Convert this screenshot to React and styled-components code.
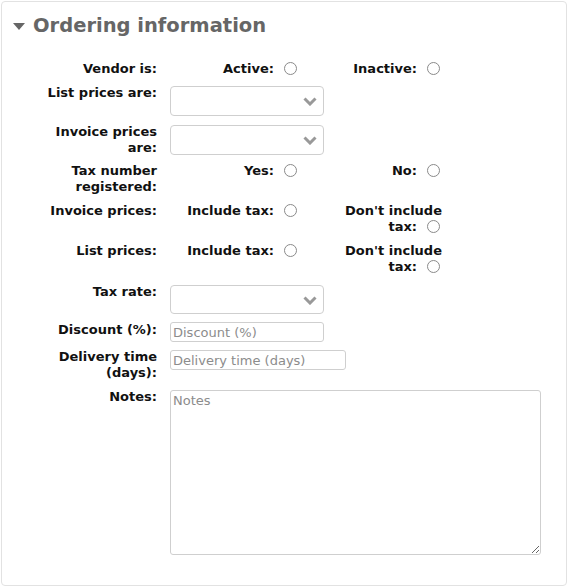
import React from 'react';
import styled, { createGlobalStyle } from 'styled-components';

const GlobalStyle = createGlobalStyle`
  html, body {
    margin: 0;
    padding: 0;
    background: #fff;
  }
  body {
    font-family: 'DejaVu Sans', sans-serif;
  }
`;

const Card = styled.fieldset`
  box-sizing: border-box;
  width: 566px;
  height: 585px;
  margin: 1px;
  padding: 0;
  border: 1px solid #e2e2e2;
  border-radius: 4px;
  min-width: 0;
`;

const Header = styled.div`
  display: flex;
  align-items: center;
  gap: 8px;
  padding: 12px 0 0 11px;
  margin-bottom: 23px;
  height: 24px;
`;

const Caret = styled.svg`
  width: 12px;
  height: 7px;
  fill: #666;
  margin-top: 1px;
`;

const Title = styled.h2`
  margin: 0;
  font-size: 19.5px;
  line-height: 24px;
  font-weight: bold;
  color: #666;
`;

const Form = styled.div`
  display: flex;
  flex-direction: column;
`;

const Row = styled.div`
  display: grid;
  grid-template-columns: 155px auto;
  column-gap: 13px;
  align-items: start;
  margin-bottom: ${(p) => p.$space ?? 8}px;
`;

const Label = styled.div`
  box-sizing: border-box;
  padding: ${(p) => p.$top || 0}px 0 0 43px;
  text-align: right;
  font-size: 13px;
  line-height: 16px;
  font-weight: bold;
  color: #111;
`;

const Options = styled.div`
  display: flex;
  gap: 14px;
`;

const Option = styled.label`
  width: 129px;
  text-align: right;
  font-size: 13px;
  line-height: 16px;
  font-weight: bold;
  color: #111;
`;

const Radio = styled.input.attrs({ type: 'radio' })`
  appearance: none;
  box-sizing: border-box;
  display: inline-block;
  width: 13px;
  height: 13px;
  margin: 1px 2px 0 10px;
  vertical-align: top;
  border: 1px solid #8a8a8a;
  border-radius: 50%;
  background: #fff;
`;

const SelectBox = styled.div`
  position: relative;
  box-sizing: border-box;
  width: 154px;
  height: ${(p) => p.$h || 30}px;
  margin-top: ${(p) => p.$top || 0}px;
  border: 1px solid #cfcfcf;
  border-radius: 4px;
  background: #fff;
`;

const Chevron = styled.svg`
  position: absolute;
  right: 6px;
  top: 50%;
  width: 14px;
  height: 9px;
  margin-top: -4px;
  fill: none;
  stroke: #999;
  stroke-width: 3;
`;

const TextInput = styled.input`
  box-sizing: border-box;
  width: ${(p) => p.$w}px;
  height: 20px;
  margin-top: ${(p) => p.$top || 0}px;
  padding: 0 2px;
  border: 1px solid #cfcfcf;
  border-radius: 3px;
  font-family: 'DejaVu Sans', sans-serif;
  font-size: 13px;
  color: #333;
  &::placeholder {
    color: #8c8c8c;
  }
`;

const Notes = styled.textarea`
  box-sizing: border-box;
  width: 371px;
  height: 165px;
  margin: 1px 0 0;
  padding: 2px 2px;
  border: 1px solid #cfcfcf;
  border-radius: 3px;
  font-family: 'DejaVu Sans', sans-serif;
  font-size: 13px;
  line-height: 16px;
  resize: both;
  &::placeholder {
    color: #8c8c8c;
  }
`;

function Select({ h, top }) {
  return (
    <SelectBox $h={h} $top={top}>
      <Chevron viewBox="0 0 14 9">
        <polyline points="1.5,1.5 7,7 12.5,1.5" />
      </Chevron>
    </SelectBox>
  );
}

function RadioPair({ name, left, right }) {
  return (
    <Options>
      <Option>
        {left}
        <Radio name={name} />
      </Option>
      <Option>
        {right}
        <Radio name={name} />
      </Option>
    </Options>
  );
}

export default function App() {
  return (
    <>
      <GlobalStyle />
      <Card>
        <Header>
          <Caret viewBox="0 0 12 7">
            <polygon points="0,0 12,0 6,7" />
          </Caret>
          <Title>Ordering information</Title>
        </Header>
        <Form>
          <Row>
            <Label>Vendor is:</Label>
            <RadioPair name="active" left="Active:" right="Inactive:" />
          </Row>
          <Row>
            <Label>List prices are:</Label>
            <Select top={1} />
          </Row>
          <Row $space={7}>
            <Label>Invoice prices are:</Label>
            <Select top={1} />
          </Row>
          <Row>
            <Label>Tax number registered:</Label>
            <RadioPair name="taxreg" left="Yes:" right="No:" />
          </Row>
          <Row>
            <Label>Invoice prices:</Label>
            <RadioPair name="invtax" left="Include tax:" right="Don't include tax:" />
          </Row>
          <Row>
            <Label>List prices:</Label>
            <RadioPair name="listtax" left="Include tax:" right="Don't include tax:" />
          </Row>
          <Row>
            <Label $top={1}>Tax rate:</Label>
            <Select h={29} top={2} />
          </Row>
          <Row $space={7}>
            <Label>Discount (%):</Label>
            <TextInput $w={154} placeholder="Discount (%)" />
          </Row>
          <Row>
            <Label>Delivery time (days):</Label>
            <TextInput $w={176} $top={1} placeholder="Delivery time (days)" />
          </Row>
          <Row>
            <Label>Notes:</Label>
            <Notes placeholder="Notes" />
          </Row>
        </Form>
      </Card>
    </>
  );
}
